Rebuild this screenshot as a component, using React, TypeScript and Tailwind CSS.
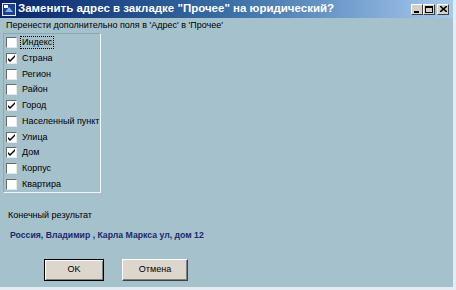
import { useState } from "react";

const fields = [
  { label: "Индекс", checked: false },
  { label: "Страна", checked: true },
  { label: "Регион", checked: false },
  { label: "Район", checked: false },
  { label: "Город", checked: true },
  { label: "Населенный пункт", checked: false },
  { label: "Улица", checked: true },
  { label: "Дом", checked: true },
  { label: "Корпус", checked: false },
  { label: "Квартира", checked: false },
];

const CheckBox = ({ checked, onClick }: { checked: boolean; onClick: () => void }) => (
  <span
    onClick={onClick}
    className="w-[11px] h-[11px] bg-white border border-t-[#6b6b6b] border-l-[#6b6b6b] border-r-[#e8e8e8] border-b-[#e8e8e8] flex items-center justify-center shrink-0"
  >
    {checked && (
      <svg width="7" height="7" viewBox="0 0 7 7">
        <path d="M0 3 L2 5 L7 0 L7 2 L2 7 L0 5 Z" fill="#000" />
      </svg>
    )}
  </span>
);

const TitleButton = ({ children }: { children: React.ReactNode }) => (
  <span className="w-[12px] h-[11px] bg-[#d4d0c8] border border-t-white border-l-white border-r-[#404040] border-b-[#404040] flex items-center justify-center text-black">
    {children}
  </span>
);

export default function App() {
  const [items, setItems] = useState(fields);

  const toggle = (i: number) =>
    setItems((prev) => prev.map((it, idx) => (idx === i ? { ...it, checked: !it.checked } : it)));

  return (
    <div className="w-[456px] h-[290px] flex flex-col bg-[#a5c1cc] border-r-[3px] border-b-[3px] border-r-[#e4eef2] border-b-[#e4eef2] font-['Liberation_Sans',Arial,sans-serif] text-[9px] text-black overflow-hidden">
      {/* Title bar */}
      <div className="h-[18px] shrink-0 flex items-center pl-[2px] pr-[4px] bg-gradient-to-r from-[#0a246a] via-[#3a6ea5] to-[#a6caf0]">
        <span className="w-[14px] h-[13px] bg-[#e8e8e8] flex items-center justify-center mr-[2px]">
          <svg width="12" height="11" viewBox="0 0 12 11">
            <rect width="12" height="11" fill="#1c3f95" />
            <path d="M2 8 L6 3 L10 8 Z" fill="#7fb3e6" />
            <rect x="1" y="1" width="4" height="3" fill="#ffffff" />
          </svg>
        </span>
        <span className="text-white font-bold text-[11.5px] flex-1 whitespace-nowrap">
          Заменить адрес в закладке "Прочее" на юридический?
        </span>
        <div className="flex gap-0">
          <TitleButton>
            <span className="w-[5px] h-[2px] bg-black mt-[5px] mr-[1px]" />
          </TitleButton>
          <TitleButton>
            <span className="w-[8px] h-[7px] border border-black border-t-2" />
          </TitleButton>
          <span className="w-[2px]" />
          <TitleButton>
            <svg width="7" height="6" viewBox="0 0 7 6">
              <path d="M0 0 L7 6 M7 0 L0 6" stroke="#000" strokeWidth="1.6" />
            </svg>
          </TitleButton>
        </div>
      </div>

      {/* Body */}
      <div className="flex-1 flex flex-col pl-[6px] pt-[2px]">
        <div className="leading-[11px]">Перенести дополнительно поля в 'Адрес' в 'Прочее'</div>

        <div className="ml-[-3px] mt-[2px] w-[98px] h-[160px] border border-[#eef5f8] border-l-[#8aa8b5] border-t-[#8aa8b5] pl-[2px] pt-[1px] flex flex-col">
          {items.map((it, i) => (
            <label key={it.label} className="h-[15.9px] flex items-center gap-[4px] cursor-default">
              <CheckBox checked={it.checked} onClick={() => toggle(i)} />
              <span className={`leading-[11px] px-[1px] whitespace-nowrap ${i === 0 ? "outline outline-1 outline-dotted outline-black" : ""}`}>
                {it.label}
              </span>
            </label>
          ))}
        </div>

        <div className="mt-[17px] ml-[2px] leading-[11px]">Конечный результат</div>
        <div className="mt-[9px] ml-[4px] leading-[11px] font-bold text-[8.7px] text-[#1a2a6c]">
          Россия, Владимир , Карла Маркса ул, дом 12
        </div>

        <div className="mt-[18px] ml-[38px] flex gap-[18px]">
          <button className="w-[60px] h-[22px] bg-[#ddd6cc] border border-black shadow-[inset_1px_1px_0_#fff,inset_-1px_-1px_0_#808080] text-[9px]">
            OK
          </button>
          <button className="w-[66px] h-[22px] bg-[#ddd6cc] border border-t-white border-l-white border-r-[#404040] border-b-[#404040] shadow-[inset_-1px_-1px_0_#808080] text-[9px]">
            Отмена
          </button>
        </div>
      </div>
    </div>
  );
}
